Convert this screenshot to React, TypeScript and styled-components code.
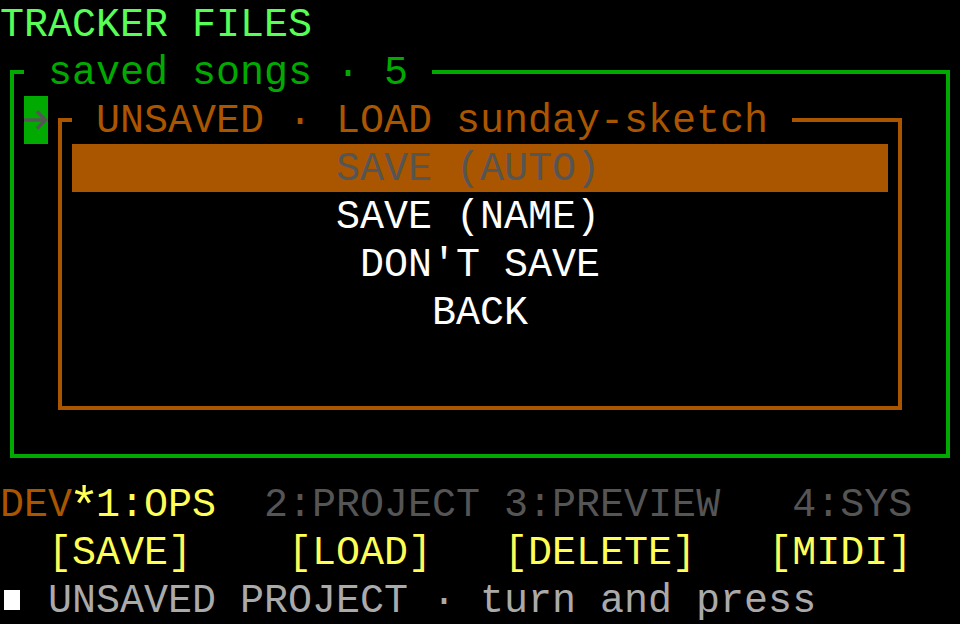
import * as React from "react";
import styled, { createGlobalStyle } from "styled-components";

const CELL_W = 24;
const CELL_H = 48;
const MENU_COLS = 34;

const GlobalStyle = createGlobalStyle`
  html, body {
    margin: 0;
    padding: 0;
    background: #000;
  }
`;

const Screen = styled.div`
  display: grid;
  grid-template-columns: repeat(40, ${CELL_W}px);
  grid-template-rows: repeat(13, ${CELL_H}px);
  width: 960px;
  height: 624px;
  overflow: hidden;
  background: #000;
  font-family: "Liberation Mono", "DejaVu Sans Mono", monospace;
  font-size: 40px;
  line-height: ${CELL_H}px;
  white-space: pre;
`;

const Line = styled.div<{ $row: number; $color?: string }>`
  grid-row: ${(p) => p.$row};
  grid-column: 1 / -1;
  color: ${(p) => p.$color || "#fff"};
  padding-top: 2px;
`;

const Frame = styled.div<{ $rows: string; $cols: string; $color: string }>`
  grid-row: ${(p) => p.$rows};
  grid-column: ${(p) => p.$cols};
  margin: 22px 10px;
  border: 4px solid ${(p) => p.$color};
`;

const FrameTitle = styled.div<{ $row: number; $col: number; $color: string }>`
  grid-row: ${(p) => p.$row};
  grid-column: ${(p) => p.$col} / span 30;
  justify-self: start;
  padding: 2px ${CELL_W}px 0;
  background: #000;
  color: ${(p) => p.$color};
  z-index: 1;
`;

const Cursor = styled.div`
  grid-row: 3;
  grid-column: 2;
  display: flex;
  background: #00aa00;
  z-index: 1;
`;

const Menu = styled.div`
  grid-row: 4 / 8;
  grid-column: 4 / 38;
  display: flex;
  flex-direction: column;
`;

const MenuItem = styled.div<{ $selected?: boolean; $indent: number }>`
  height: ${CELL_H}px;
  padding: 2px 0 0 ${(p) => p.$indent * CELL_W}px;
  box-sizing: border-box;
  background: ${(p) => (p.$selected ? "#aa5500" : "transparent")};
  color: ${(p) => (p.$selected ? "#555" : "#fff")};
`;

const Tone = styled.span<{ $color: string }>`
  color: ${(p) => p.$color};
`;

const Star = styled.span`
  display: inline-flex;
  justify-content: center;
  width: 16px;
  margin: 0 4px;
  line-height: 20px;
  color: #ffff55;
  transform: translateY(4px) scale(1.3);
`;

const StatusLine = styled.div`
  grid-row: 13;
  grid-column: 1 / -1;
  display: flex;
  align-items: flex-start;
  color: #aaa;
  padding-top: 2px;
`;

const Block = styled.span`
  width: 16px;
  height: 20px;
  margin: 12px 4px 0;
  background: #fff;
  flex: none;
`;

const menuItems = [
  { label: "SAVE (AUTO)", selected: true },
  { label: "SAVE (NAME)" },
  { label: "DON'T SAVE" },
  { label: "BACK" },
];

const ArrowGlyph = () => (
  <svg width={CELL_W} height={CELL_H} viewBox="0 0 24 48">
    <path
      d="M0 24H21M13 15.5L21.5 24L13 32.5"
      fill="none"
      stroke="#555"
      strokeWidth={3.5}
    />
  </svg>
);

export default function App() {
  return (
    <Screen>
      <GlobalStyle />
      <Line $row={1} $color="#55ff55">TRACKER FILES</Line>

      <Frame $rows="2 / 11" $cols="1 / 41" $color="#00aa00" />
      <FrameTitle $row={2} $col={2} $color="#00aa00">
        saved songs · 5
      </FrameTitle>

      <Cursor>
        <ArrowGlyph />
      </Cursor>
      <Frame $rows="3 / 10" $cols="3 / 39" $color="#aa5500" />
      <FrameTitle $row={3} $col={4} $color="#aa5500">
        UNSAVED · LOAD sunday-sketch
      </FrameTitle>

      <Menu>
        {menuItems.map((item) => (
          <MenuItem
            key={item.label}
            $selected={item.selected}
            $indent={Math.floor((MENU_COLS - item.label.length) / 2)}
          >
            {item.label}
          </MenuItem>
        ))}
      </Menu>

      <Line $row={11} $color="#555">
        <Tone $color="#aa5500">DEV</Tone>
        <Star>*</Star>
        <Tone $color="#ffff55">1:OPS</Tone>
        {"  2:PROJECT 3:PREVIEW   4:SYS"}
      </Line>

      <Line $row={12} $color="#ffff55">
        {"  [SAVE]    [LOAD]   [DELETE]   [MIDI]"}
      </Line>

      <StatusLine>
        <Block />
        {" UNSAVED PROJECT · turn and press"}
      </StatusLine>
    </Screen>
  );
}
